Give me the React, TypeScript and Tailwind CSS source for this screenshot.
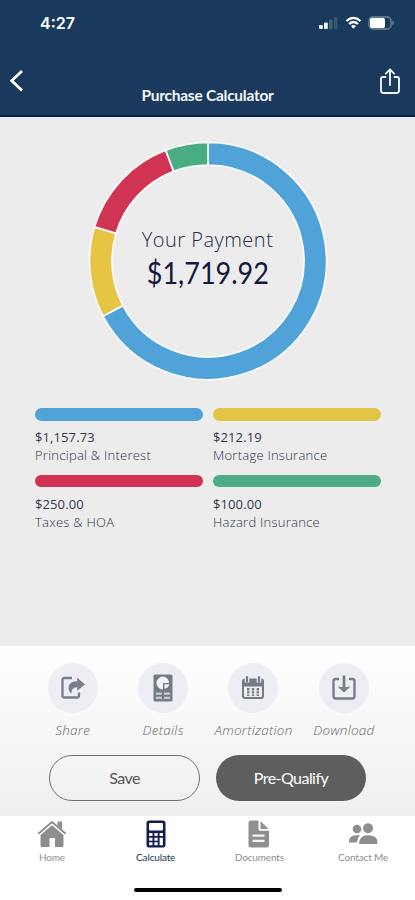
// App.tsx
const segments = [
  { label: "Principal & Interest", amount: "$1,157.73", value: 1157.73, color: "#4fa3d8", bar: "bg-[#4fa3d8]" },
  { label: "Mortage Insurance", amount: "$212.19", value: 212.19, color: "#e6c545", bar: "bg-[#e4c444]" },
  { label: "Taxes & HOA", amount: "$250.00", value: 250, color: "#d03453", bar: "bg-[#d13253]" },
  { label: "Hazard Insurance", amount: "$100.00", value: 100, color: "#4aad82", bar: "bg-[#4dab85]" },
]

const total = segments.reduce((sum, s) => sum + s.value, 0)

function point(angle: number, r: number) {
  return `${(120 + r * Math.sin(angle)).toFixed(2)} ${(120 - r * Math.cos(angle)).toFixed(2)}`
}

function Donut() {
  let start = 0
  return (
    <svg viewBox="0 0 240 240" className="size-60">
      {segments.map((s) => {
        const end = start + (s.value / total) * Math.PI * 2
        const large = end - start > Math.PI ? 1 : 0
        const d = `M${point(start, 118.5)}A118.5 118.5 0 ${large} 1 ${point(end, 118.5)}L${point(end, 96)}A96 96 0 ${large} 0 ${point(start, 96)}Z`
        start = end
        return <path key={s.label} d={d} fill={s.color} stroke="#fafafa" strokeWidth="1.7" />
      })}
    </svg>
  )
}

function Header() {
  return (
    <header className="h-[117px] shrink-0 border-b-2 border-[#0b1f50] bg-[#1a3a5d] text-white">
      <div className="flex h-[46px] items-center justify-between pl-10 pr-5">
        <span className="font-['Inter'] text-[16px] font-semibold leading-5">4:27</span>
        <div className="flex items-center gap-[6px]">
          <svg width="20" height="14" viewBox="0 0 20 14">
            <rect x="0" y="9" width="3.8" height="4" rx="1" fill="#f1f4f6" />
            <rect x="5" y="6.5" width="3.8" height="6.5" rx="1" fill="#f1f4f6" />
            <rect x="10" y="3.5" width="3.5" height="9.5" rx="1" fill="#426078" />
            <rect x="15" y="1" width="3.5" height="12" rx="1" fill="#365570" />
          </svg>
          <svg width="17" height="14" viewBox="0 0 16 14" fill="none" stroke="#fff" strokeWidth="2.3">
            <path d="M1 5Q8-1.3 15 5M3.6 8Q8 4 12.4 8" />
            <path d="M5.6 9.9Q8 8 10.4 9.9L8 12.8Z" fill="#fff" stroke="none" />
          </svg>
          <svg width="27" height="14" viewBox="0 0 27 14">
            <rect x="1" y="1" width="22" height="12" rx="4" fill="none" stroke="#718799" strokeWidth="1.3" />
            <rect x="2" y="2" width="15" height="10" rx="2" fill="#fff" />
            <path d="M24.5 4.5Q27 7 24.5 9.5Z" fill="#8497a6" />
          </svg>
        </div>
      </div>
      <div className="flex h-[69px] justify-between pl-[9px] pr-[13px]">
        <svg width="15" height="23" viewBox="0 0 15 23" className="mt-[23px]" fill="none" stroke="#fff" strokeWidth="2.8">
          <path d="M13 2 2.7 11.7 13 21.5" />
        </svg>
        <h1 className="mt-[39px] pl-[13px] font-['Lato'] text-[15.5px] font-bold leading-5 tracking-[-0.25px] text-[#f3f6f9]">
          Purchase Calculator
        </h1>
        <svg width="24" height="28" viewBox="0 0 24 28" className="mt-[21px]" fill="none" stroke="#edf3fa" strokeWidth="1.9" strokeLinecap="round" strokeLinejoin="round">
          <path d="M7.5 10H5Q3 10 3 12V23.5Q3 26 5.5 26H18.5Q21 26 21 23.5V12Q21 10 19 10H16.5M12 18V3M7.8 6.6 12 2.5 16.2 6.6" />
        </svg>
      </div>
    </header>
  )
}

function ShareIcon() {
  return (
    <svg width="26" height="26" viewBox="0 0 26 26">
      <path d="M12 3H4.5Q2.5 3 2.5 5V20.5Q2.5 22.5 4.5 22.5H17Q19 22.5 19 20.5V17.5" fill="none" stroke="#777f8a" strokeWidth="2.3" />
      <path d="M17.2 2.7 25 9.4 17.2 15.8V12.2Q11.5 12 11.4 18.5 7.7 15.8 8.7 11.2 10 6.2 17.2 6.2Z" fill="#777f8a" />
    </svg>
  )
}

function DetailsIcon() {
  return (
    <svg width="20" height="28" viewBox="0 0 20 28">
      <rect x="0.5" y="0.5" width="19" height="27" rx="1.5" fill="#747b87" />
      <path d="M10 2.5A6.5 6.5 0 1 0 10 15.5V9H16A6.5 6.5 0 0 0 10 2.5Z" fill="#f1f3f6" />
      <path d="M11.5 10.3H16.2A5.3 5.3 0 0 1 11.5 14.6Z" fill="#f1f3f6" />
      <path d="M3 18.5h6v2.2H3zM11 18.5h6v2.2h-6zM3 22.8h6V25H3zM11 22.8h6V25h-6z" fill="#c6cad1" />
    </svg>
  )
}

function CalendarIcon() {
  return (
    <svg width="24" height="26" viewBox="0 0 24 26">
      <rect x="2" y="4.5" width="20" height="18.5" rx="2" fill="none" stroke="#747b84" strokeWidth="2" />
      <path d="M2 4h20v7.5H2z" fill="#747b84" />
      <path d="M6 0v7.5M18 0v7.5" stroke="#eceef3" strokeWidth="4.6" />
      <path d="M6 2v4.5M18 2v4.5" stroke="#747b84" strokeWidth="2.2" strokeLinecap="round" />
      <path d="M7.2 13v8M12 13v8M16.8 13v8" stroke="#747b84" strokeWidth="2.4" strokeDasharray="2.4 .8" />
    </svg>
  )
}

function DownloadIcon() {
  return (
    <svg width="26" height="28" viewBox="0 0 26 28" fill="none" stroke="#777f89" strokeWidth="2.4">
      <path d="M8 5H4.5Q2.5 5 2.5 7V22Q2.5 24.5 5 24.5H21Q23.5 24.5 23.5 22V7Q23.5 5 21.5 5H18" />
      <path d="M13 1.5V16" strokeWidth="2.8" />
      <path d="M7.5 13 13 18 18.5 13Q13 15 7.5 13Z" fill="#777f89" strokeWidth="1" />
    </svg>
  )
}

function HomeIcon() {
  return (
    <svg width="30" height="28" viewBox="0 0 30 28" fill="#8e8e8e">
      <path d="M3.5 15 15 5.3 26.5 15V25.5Q26.5 27 25 27H18V18H12.5V27H5Q3.5 27 3.5 25.5Z" />
      <path d="M1.3 13.8 15 2 28.7 13.8" fill="none" stroke="#8e8e8e" strokeWidth="1.8" />
      <path d="M20.5 1.5H25V9.5L20.5 5.6Z" />
    </svg>
  )
}

function CalculatorIcon() {
  return (
    <svg width="20" height="28" viewBox="0 0 20 28">
      <rect x="0.5" y="0.5" width="19" height="27" rx="2.8" fill="#101d4d" />
      <rect x="3" y="3" width="14" height="7.5" rx="1" fill="#fff" />
      <path d="M3.2 13h3.3v3H3.2zM8.4 13h3.3v3H8.4zM13.6 13h3.3v3h-3.3zM3.2 17.7h3.3v3H3.2zM8.4 17.7h3.3v3H8.4zM3.2 22.3h3.3v3H3.2zM8.4 22.3h3.3v3H8.4zM13.6 17.7h3.3v7.6h-3.3z" fill="#fff" />
    </svg>
  )
}

function DocumentIcon() {
  return (
    <svg width="22" height="28" viewBox="0 0 22 28" fill="#8f8f8f">
      <path d="M3 .5H10.5V9Q10.5 10.7 12.2 10.7H21V25Q21 27.5 18.5 27.5H3Q.5 27.5 .5 25V3Q.5 .5 3 .5Z" />
      <path d="M12.5 1 20.5 9H12.5Z" />
      <path d="M4.5 14.5h12v2.3h-12zM4.5 19.8h12v2.3h-12z" fill="#f7f7f7" />
    </svg>
  )
}

function PeopleIcon() {
  return (
    <svg width="30" height="24" viewBox="0 0 30 24" fill="#8e8e8e">
      <circle cx="9" cy="7" r="4.3" />
      <circle cx="20" cy="6.3" r="5" />
      <path d="M11 22Q11 13.3 20 13.3T29.4 19.7V22ZM.8 20.5Q.8 13.5 8 13.3H12Q9.3 16 9 20.5Z" />
    </svg>
  )
}

function Action({ icon, label }: { icon: React.ReactNode; label: string }) {
  return (
    <button className="flex w-[90.4px] flex-col items-center">
      <span className="flex size-[50px] items-center justify-center rounded-full bg-[#eceef3]">{icon}</span>
      <span className="mt-[7px] whitespace-nowrap font-['Open_Sans'] text-[13.5px] font-light italic leading-5 tracking-[0.25px] text-[#666]">{label}</span>
    </button>
  )
}

function Tab({ icon, label, active }: { icon: React.ReactNode; label: string; active?: boolean }) {
  return (
    <a className={active ? "flex w-[103.7px] flex-col items-center text-[#17364b]" : "flex w-[103.7px] flex-col items-center text-[#8e8e8e]"}>
      <span className="flex h-7 items-center">{icon}</span>
      <span className="mt-[2px] font-['Lato'] text-[10px] leading-[14px] tracking-[-0.15px]">{label}</span>
    </a>
  )
}

export default function App() {
  return (
    <div className="flex h-[900px] w-[415px] flex-col overflow-hidden bg-[#ececec]">
      <Header />
      <main className="flex flex-1 flex-col items-center pt-6">
        <div className="grid place-items-center">
          <div className="col-start-1 row-start-1">
            <Donut />
          </div>
          <div className="col-start-1 row-start-1 flex flex-col items-center pb-[6px]">
            <span className="font-['Open_Sans'] text-[20px] font-light leading-7 tracking-[0.5px] text-[#282d49]">Your Payment</span>
            <span className="scale-x-[.9] font-['Lato'] text-[30px] leading-9 text-[#15183e]">$1,719.92</span>
          </div>
        </div>
        <div className="mt-[27px] grid w-[347px] grid-cols-2 gap-x-[10px] gap-y-[2px] pl-[1px]">
          {segments.map((s) => (
            <div key={s.label} className="h-[64.5px] font-['Open_Sans'] text-[13px] leading-[18px]">
              <div className={`h-[12.5px] rounded-full ${s.bar}`} />
              <p className="mt-[7.5px] tracking-[0.1px] text-[#33374b]">{s.amount}</p>
              <p className="font-light tracking-[0.25px] text-[#30354d]">{s.label}</p>
            </div>
          ))}
        </div>
      </main>
      <section className="h-[170px] shrink-0 bg-linear-to-b from-white to-[#efefef] pt-[17px]">
        <div className="flex pl-[27.5px]">
          <Action icon={<ShareIcon />} label="Share" />
          <Action icon={<DetailsIcon />} label="Details" />
          <Action icon={<CalendarIcon />} label="Amortization" />
          <Action icon={<DownloadIcon />} label="Download" />
        </div>
        <div className="mt-[15px] flex gap-4 pl-[49px] font-['Lato'] text-[16px] tracking-[-0.55px]">
          <button className="h-[46px] w-[151px] rounded-full border border-[#707070] text-[#555]">Save</button>
          <button className="h-[46px] w-[150px] rounded-full bg-[#5e5e5e] text-white">Pre-Qualify</button>
        </div>
      </section>
      <nav className="flex h-[84px] shrink-0 flex-col items-center bg-white pt-1">
        <div className="flex">
          <Tab icon={<HomeIcon />} label="Home" />
          <Tab icon={<CalculatorIcon />} label="Calculate" active />
          <Tab icon={<DocumentIcon />} label="Documents" />
          <Tab icon={<PeopleIcon />} label="Contact Me" />
        </div>
        <div className="mt-6 h-1 w-[148px] rounded-full bg-black" />
      </nav>
    </div>
  )
}
